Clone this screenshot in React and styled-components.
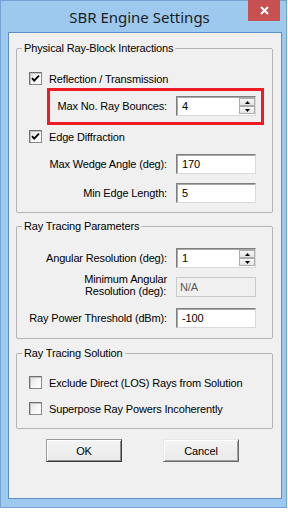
import React from 'react';
import styled, { createGlobalStyle } from 'styled-components';

const GlobalStyle = createGlobalStyle`
  html, body { margin: 0; padding: 0; background: #ffffff; }
  body { font-family: "Liberation Sans", Arial, sans-serif; }
  * { box-sizing: border-box; }
`;

const Window = styled.div`
  width: 287px;
  height: 508px;
  border: 1px solid #74a3d3;
  background: #9dc9ef;
  display: flex;
  flex-direction: column;
  padding: 0 4px 8px 7px;
`;

const TitleBar = styled.div`
  height: 31px;
  flex-shrink: 0;
  display: flex;
  align-items: flex-start;
`;

const Title = styled.div`
  flex: 1;
  text-align: center;
  padding-left: 23px;
  font-family: "Noto Sans", "Open Sans", sans-serif;
  font-size: 15px;
  line-height: 33px;
  color: #1c1c1c;
`;

const CloseButton = styled.div`
  width: 32px;
  height: 21px;
  margin-top: -1px;
  margin-right: 2px;
  background: #c75050;
  display: flex;
  align-items: center;
  justify-content: center;
`;

const Client = styled.div`
  flex: 1;
  border: 1px solid #5f8fc7;
  background: #f0f0f0;
  padding-top: 9px;
  display: flex;
  flex-direction: column;
  font-size: 11px;
  letter-spacing: -0.15px;
  color: #000;
`;

const Group = styled.fieldset`
  margin: ${(p) => p.$mt}px 8px 0 7px;
  padding: 0 0 ${(p) => p.$pb}px 0;
  border: 1px solid #b4b4b4;
  border-radius: 2px;
  min-width: 0;
  display: flex;
  flex-direction: column;
`;

const Legend = styled.legend`
  margin-left: 5px;
  padding: 0 2px;
  font-size: 11px;
  line-height: 13px;
  color: #000;
`;

const CheckRow = styled.div`
  margin-top: ${(p) => p.$mt}px;
  height: 17px;
  padding-left: 12px;
  display: flex;
  align-items: center;
  gap: 7px;
  white-space: nowrap;
`;

const Box = styled.span`
  width: 13px;
  height: 13px;
  flex-shrink: 0;
  border: 1px solid #8a8a8a;
  border-top-color: #6e6e6e;
  border-left-color: #6e6e6e;
  background: linear-gradient(135deg, #dcdcdc 0%, #f4f4f4 45%, #ffffff 100%);
  box-shadow: inset 1px 1px 0 #c4c4c4;
  display: flex;
  align-items: center;
  justify-content: center;
`;

const Highlight = styled.div`
  margin: ${(p) => p.$mt}px 0 0 30px;
  width: 217px;
  border: 3px solid #ed1c24;
  padding: 5px 4px 6px 0;
`;

const FieldRow = styled.div`
  margin-top: ${(p) => p.$mt || 0}px;
  display: grid;
  grid-template-columns: ${(p) => p.$labelWidth}px 80px;
  column-gap: 9px;
  align-items: ${(p) => p.$align || 'center'};
`;

const Label = styled.div`
  justify-self: end;
  text-align: ${(p) => (p.$center ? 'center' : 'right')};
  white-space: nowrap;
  line-height: ${(p) => (p.$center ? '12px' : '13px')};
`;

const InputBox = styled.div`
  height: 20px;
  display: flex;
  align-items: center;
  padding-left: ${(p) => (p.$disabled ? 3 : 5)}px;
  background: ${(p) => (p.$disabled ? '#f0f0f0' : '#ffffff')};
  color: ${(p) => (p.$disabled ? '#5a5a5a' : '#000')};
  border: 1px solid;
  border-color: ${(p) =>
    p.$disabled ? '#c9c9c9' : '#7f7f7f #d9d9d9 #d9d9d9 #7f7f7f'};
  box-shadow: ${(p) => (p.$disabled ? 'none' : 'inset 1px 1px 0 #a9a9a9')};
`;

const InputText = styled.span`
  flex: 1;
  line-height: 13px;
`;

const SpinColumn = styled.div`
  width: 16px;
  align-self: stretch;
  display: flex;
  flex-direction: column;
  margin: 1px 0;
`;

const SpinButton = styled.div`
  flex: 1;
  border: 1px solid #acacac;
  background: linear-gradient(#f7f7f7, #e4e4e4);
  display: flex;
  align-items: center;
  justify-content: center;
`;

const ButtonRow = styled.div`
  margin-top: 10px;
  padding-left: 37px;
  display: flex;
  gap: 41px;
`;

const DialogButton = styled.div`
  width: 76px;
  height: 23px;
  display: flex;
  align-items: center;
  justify-content: center;
  background: linear-gradient(#f4f4f4, #e9e9e9);
  border: 1px solid;
  border-color: ${(p) =>
    p.$default ? '#9a9a9a #3f3f3f #3f3f3f #9a9a9a' : '#e6e6e6 #6a6a6a #6a6a6a #e6e6e6'};
  box-shadow: ${(p) =>
    p.$default
      ? 'inset 1px 1px 0 #ffffff, inset -1px -1px 0 #8a8a8a'
      : 'inset 1px 1px 0 #ffffff, inset -1px -1px 0 #a0a0a0'};
  font-size: 11px;
`;

function CheckIcon() {
  return (
    <svg width="9" height="9" viewBox="0 0 9 9">
      <polyline points="1,4.2 3.2,6.6 8,1.6" fill="none" stroke="#000" strokeWidth="1.8" />
    </svg>
  );
}

function Checkbox({ checked, label, mt }) {
  return (
    <CheckRow $mt={mt}>
      <Box>{checked && <CheckIcon />}</Box>
      <span>{label}</span>
    </CheckRow>
  );
}

function Arrow({ up }) {
  return (
    <svg width="5" height="3" viewBox="0 0 5 3">
      <polygon points={up ? '2.5,0 5,3 0,3' : '0,0 5,0 2.5,3'} fill="#000" />
    </svg>
  );
}

function Spinner({ value }) {
  return (
    <InputBox>
      <InputText>{value}</InputText>
      <SpinColumn>
        <SpinButton><Arrow up /></SpinButton>
        <SpinButton><Arrow /></SpinButton>
      </SpinColumn>
    </InputBox>
  );
}

function TextField({ value, disabled }) {
  return (
    <InputBox $disabled={disabled}>
      <InputText>{value}</InputText>
    </InputBox>
  );
}

export default function App() {
  return (
    <>
      <GlobalStyle />
      <Window>
        <TitleBar>
          <Title>SBR Engine Settings</Title>
          <CloseButton>
            <svg width="9" height="9" viewBox="0 0 9 9">
              <path d="M1 1 L8 8 M8 1 L1 8" stroke="#fff" strokeWidth="2" />
            </svg>
          </CloseButton>
        </TitleBar>
        <Client>
          <Group $mt={0} $pb={9}>
            <Legend>Physical Ray-Block Interactions</Legend>
            <Checkbox checked label="Reflection / Transmission" mt={15} />
            <Highlight $mt={1}>
              <FieldRow $labelWidth={117}>
                <Label>Max No. Ray Bounces:</Label>
                <Spinner value="4" />
              </FieldRow>
            </Highlight>
            <Checkbox checked label="Edge Diffraction" mt={3} />
            <FieldRow $labelWidth={150} $mt={9}>
              <Label>Max Wedge Angle (deg):</Label>
              <TextField value="170" />
            </FieldRow>
            <FieldRow $labelWidth={150} $mt={9}>
              <Label>Min Edge Length:</Label>
              <TextField value="5" />
            </FieldRow>
          </Group>

          <Group $mt={7} $pb={10}>
            <Legend>Ray Tracing Parameters</Legend>
            <FieldRow $labelWidth={150} $mt={15}>
              <Label>Angular Resolution (deg):</Label>
              <Spinner value="1" />
            </FieldRow>
            <FieldRow $labelWidth={150} $mt={5} $align="end">
              <Label $center>
                Minimum Angular
                <br />
                Resolution (deg):
              </Label>
              <TextField value="N/A" disabled />
            </FieldRow>
            <FieldRow $labelWidth={150} $mt={11}>
              <Label>Ray Power Threshold (dBm):</Label>
              <TextField value="-100" />
            </FieldRow>
          </Group>

          <Group $mt={8} $pb={11}>
            <Legend>Ray Tracing Solution</Legend>
            <Checkbox label="Exclude Direct (LOS) Rays from Solution" mt={14} />
            <Checkbox label="Superpose Ray Powers Incoherently" mt={9} />
          </Group>

          <ButtonRow>
            <DialogButton $default>OK</DialogButton>
            <DialogButton>Cancel</DialogButton>
          </ButtonRow>
        </Client>
      </Window>
    </>
  );
}
